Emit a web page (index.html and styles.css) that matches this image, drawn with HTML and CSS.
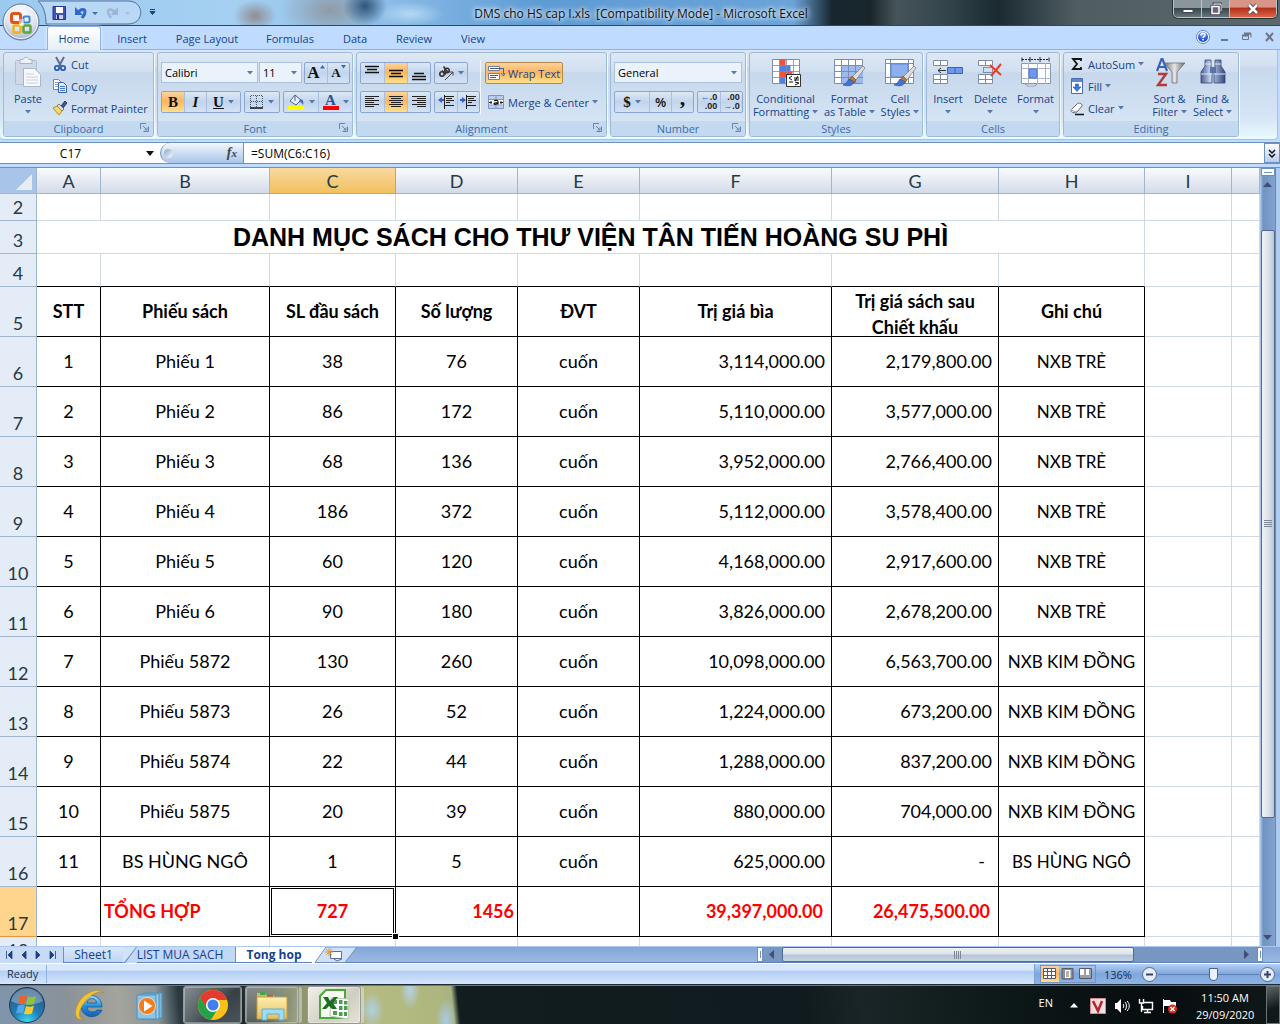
FILE: index.html
```html
<!DOCTYPE html>
<html lang="vi">
<head>
<meta charset="utf-8">
<meta name="viewport" content="width=device-width">
<title>DMS cho HS cap I.xls - Microsoft Excel</title>
<link rel="stylesheet" href="styles.css">
</head>
<body>
<svg class="defs" aria-hidden="true">
  <defs>
    <linearGradient id="gSteel" x1="0" y1="0" x2="1" y2="0"><stop offset="0" stop-color="#4a5f92"/><stop offset=".4" stop-color="#c7d5ee"/><stop offset="1" stop-color="#34497c"/></linearGradient>
    <linearGradient id="gFunnel" x1="0" y1="0" x2="1" y2="0"><stop offset="0" stop-color="#6d6d6d"/><stop offset=".5" stop-color="#e6e6e6"/><stop offset="1" stop-color="#6a6a6a"/></linearGradient>
    <radialGradient id="gOrb" cx=".5" cy=".3" r=".7"><stop offset="0" stop-color="#fff"/><stop offset=".6" stop-color="#dfe6ef"/><stop offset="1" stop-color="#9fb0c8"/></radialGradient>
    <radialGradient id="gStart" cx=".5" cy="1" r=".9"><stop offset="0" stop-color="#3fe0f5"/><stop offset=".45" stop-color="#1f7fb8"/><stop offset="1" stop-color="#31587f"/></radialGradient>
    <radialGradient id="gHelp" cx=".5" cy=".25" r=".7"><stop offset="0" stop-color="#7fb0ff"/><stop offset="1" stop-color="#0d3fc4"/></radialGradient>
    <linearGradient id="gIe" x1="0" y1="0" x2="0" y2="1"><stop offset="0" stop-color="#9fe0ff"/><stop offset=".5" stop-color="#2390dc"/><stop offset="1" stop-color="#1560b0"/></linearGradient>
    <linearGradient id="gFolder" x1="0" y1="0" x2="0" y2="1"><stop offset="0" stop-color="#fdf0b0"/><stop offset="1" stop-color="#e5bf5a"/></linearGradient>
    <symbol id="caret" viewBox="0 0 6 4"><path d="M0 0h6L3 3.500z" fill="#5579ae"/></symbol>
    <symbol id="launch" viewBox="0 0 9 9"><path d="M.5 6V.5H6M3.500 8.500h5v-5M3 3l4 4M7 4.500V7H4.500" fill="none" stroke="#6586b5"/></symbol>
    <symbol id="brush" viewBox="0 0 22 22"><path d="M20 1l2 2-9 12-4-3z" fill="#ddd" stroke="#777" stroke-width=".7"/><path d="M9 11l4 4-2 3-5-3z" fill="#b87b35" stroke="#6f4a1c" stroke-width=".6"/><path d="M6 14l5 3c-2 5-7 4-11 3 3-1 4-3 6-6z" fill="#3f74d0" stroke="#234f9e" stroke-width=".6"/></symbol>
  </defs>
</svg>

<div class="app">
  <header class="titlebar">
    <svg class="qat" width="160" height="26" viewBox="0 0 160 26">
      <path d="M38 1c5 4 8 12 8 23h82c17 0 17-23 0-23z" fill="#d4e6fb" fill-opacity=".45" stroke="#54709a"/>
      <path d="M53 6.500h12.500v13H53z" fill="#4353b8" stroke="#29348c"/><path d="M56 7h7v6h-7z" fill="#fff"/><path d="M56 15h7v4h-7z" fill="#c9cdee"/><path d="M57 15h2v4h-2z" fill="#222f80"/>
      <path d="M78 13c3-5 7-4 7-1s-2 4-3 6" fill="none" stroke="#2f69c8" stroke-width="3"/><path d="M75 7v8h8z" fill="#2f69c8"/>
      <path d="M92 12h6l-3 3z" fill="#3f6db0"/>
      <path d="M115 13c-3-5-7-4-7-1s2 4 3 6" fill="none" stroke="#9db6d8" stroke-width="2.500"/><path d="M118 7v8h-8z" fill="#9db6d8"/>
      <path d="M125 12h5l-2.500 3z" fill="#a9bfdd"/>
      <path d="M150 9.500h5M150 11.500h5l-2.500 3z" stroke="#1f3f78" fill="#1f3f78"/>
    </svg>
    <h1 class="wintitle">DMS cho HS cap I.xls&nbsp; [Compatibility Mode] - Microsoft Excel</h1>
    <div class="winbtns">
      <button aria-label="Minimize"><svg width="12" height="14" viewBox="0 0 12 14"><path d="M1 7.500h10v3H1z" fill="#fff" stroke="#445"/></svg></button>
      <button aria-label="Restore"><svg width="12" height="14" viewBox="0 0 12 14"><path d="M4 2h7v7H4z" fill="none" stroke="#445" stroke-width="3"/><path d="M4 2h7v7H4z" fill="none" stroke="#fff"/><path d="M2 4.500h7v7H2z" fill="#667" stroke="#445" stroke-width="3"/><path d="M2 4.500h7v7H2z" fill="#667" stroke="#fff" stroke-width="1.500"/></svg></button>
      <button class="close" aria-label="Close"><svg width="12" height="14" viewBox="0 0 12 14"><path d="M2 3l8 8M10 3l-8 8" stroke="#544" stroke-width="4.500"/><path d="M2 3l8 8M10 3l-8 8" stroke="#fff" stroke-width="2.500"/></svg></button>
    </div>
  </header>
  <button class="orb" aria-label="Office Button">
    <svg width="40" height="42" viewBox="0 0 40 42"><circle cx="20" cy="21" r="18" fill="url(#gOrb)" stroke="#5f7598"/><circle cx="20" cy="21" r="16.500" fill="none" stroke="#fff" stroke-opacity=".8"/>
      <g fill="none" stroke-width="3"><rect x="10.500" y="12.500" width="9" height="9" rx="2" stroke="#e2541b"/><rect x="22.500" y="15.500" width="6" height="6" rx="1" stroke="#3f86d0" stroke-width="2"/><rect x="12.500" y="24.500" width="7" height="7" rx="1" stroke="#f3b21c" stroke-width="2.500"/><rect x="22.500" y="24.500" width="7" height="7" rx="1" stroke="#5fa53c" stroke-width="2.500"/></g>
      <path d="M18 18h5v7h-5z" fill="#fff" fill-opacity=".45"/></svg>
  </button>

  <nav class="tabs">
    <button class="tab on">Home</button>
    <button class="tab t2">Insert</button>
    <button class="tab t3">Page Layout</button>
    <button class="tab t4">Formulas</button>
    <button class="tab t5">Data</button>
    <button class="tab t6">Review</button>
    <button class="tab t7">View</button>
    <svg class="docbtns" width="82" height="20" viewBox="0 0 82 20"><circle cx="10" cy="11" r="6.500" fill="#fff" stroke="#5a86c8"/><circle cx="10" cy="11" r="5" fill="url(#gHelp)"/><path d="M8 9.500c0-3 4-3 4-.5 0 1.500-2 1.500-2 3M10 13v1.500" fill="none" stroke="#fff" stroke-width="1.500"/><path d="M28 14h7" stroke="#6e7684" stroke-width="2"/><path d="M49.500 9.500h6v4h-6zM51 7.500h7v4" fill="none" stroke="#6e7684"/><path d="M49 9.500h7M51 7.500h7" stroke="#6e7684" stroke-width="2"/><path d="M73 7l7 8M80 7l-7 8" stroke="#6e7684" stroke-width="2"/></svg>
  </nav>

  <section class="ribbon">
    <div class="group g1">
      <div class="body">
        <button class="big paste">
          <svg width="28" height="32" viewBox="0 0 28 32"><rect x="1.500" y="3.500" width="21" height="24" rx="1" fill="#cfd8e6" stroke="#b3bfd1"/><path d="M6 2.500h3c0-3 6-3 6 0h3v4H6z" fill="#eef2f8" stroke="#a6b3c8"/><path d="M9.500 11.500h11l6 6v12h-17z" fill="#f7f9fc" stroke="#aab7cb"/><path d="M12 17h8M12 20h12M12 23h12M12 26h12" stroke="#c8d2e0"/></svg>
          <span>Paste</span><svg class="car"><use href="#caret"/></svg></button>
        <div class="col">
          <button class="small"><svg width="16" height="16" viewBox="0 0 16 16"><path d="M4 1l5 9M12 1L7 10" stroke="#5c6f8e" stroke-width="2"/><circle cx="5" cy="12" r="2.200" fill="none" stroke="#2e5fb4" stroke-width="1.800"/><circle cx="11" cy="12" r="2.200" fill="none" stroke="#2e5fb4" stroke-width="1.800"/></svg>Cut</button>
          <button class="small"><svg width="16" height="16" viewBox="0 0 16 16"><path d="M1.500 1.500h5l3 3v7h-8z" fill="#fff" stroke="#6f87b5"/><path d="M3 4.500h3M3 6.500h4M3 8.500h4" stroke="#7f9bd0"/><path d="M6.500 4.500h5l3 3v7h-8z" fill="#dfe9fb" stroke="#3c5ea8"/><path d="M8 8.500h5M8 10.500h5M8 12.500h5" stroke="#4a78cc"/></svg>Copy</button>
          <button class="small"><svg width="16" height="16" viewBox="0 0 16 16"><path d="M13 1l2 2-4 5-2-2z" fill="#46578a" stroke="#2d3b68"/><path d="M7 4l5 5-2 2-5-5z" fill="#ddd" stroke="#8a7a55"/><path d="M5 6l5 5-3 4-6-7z" fill="#f7d86a" stroke="#b48a28"/></svg>Format Painter</button>
        </div>
      </div>
      <div class="cap">Clipboard<svg class="lau"><use href="#launch"/></svg></div>
    </div>

    <div class="group g2">
      <div class="body rows">
        <div class="line">
          <span class="picks"><select class="w96" aria-label="Font"><option>Calibri</option></select><select class="w43" aria-label="Font size"><option>11</option></select></span>
          <span class="set"><button class="b22" aria-label="Grow Font"><span class="serif grow">A</span><svg class="up" width="5" height="4" viewBox="0 0 5 4"><path d="M0 3.500h5L2.500 0z" fill="#3a68b2"/></svg></button><button class="b22" aria-label="Shrink Font"><span class="serif shrink">A</span><svg class="up" width="5" height="4" viewBox="0 0 5 4"><path d="M0 0h5L2.500 3.500z" fill="#3a68b2"/></svg></button></span>
        </div>
        <div class="line">
          <span class="set"><button class="b22 hot serif" aria-label="Bold">B</button><button class="b22 serif ital" aria-label="Italic">I</button><button class="b34 serif und" aria-label="Underline"><u>U</u><svg class="car"><use href="#caret"/></svg></button></span>
          <span class="set"><button class="b34" aria-label="Borders"><svg width="14" height="14" viewBox="0 0 14 14"><path d="M.5 12V.5h12V12M6.500 1v11M1 6.500h12" fill="none" stroke="#456" stroke-dasharray="1 1"/><path d="M0 13h13" stroke="#111" stroke-width="1.500"/></svg><svg class="car"><use href="#caret"/></svg></button></span>
          <span class="set"><button class="b34" aria-label="Fill Color"><svg width="17" height="16" viewBox="0 0 17 16"><path d="M7 1l6 5-5 5-6-4z" fill="#e9eefa" stroke="#4d628e"/><path d="M7 1v6" stroke="#4d628e"/><path d="M12 5c3 0 4 3 3 6-1-2-2-3-4-3z" fill="#3e70c8"/><path d="M0 12h16v4H0z" fill="#ff0"/></svg><svg class="car"><use href="#caret"/></svg></button><button class="b34" aria-label="Font Color"><span class="fontcolor serif">A</span><svg class="car"><use href="#caret"/></svg></button></span>
        </div>
      </div>
      <div class="cap">Font<svg class="lau"><use href="#launch"/></svg></div>
    </div>

    <div class="group g3">
      <div class="body">
        <div class="rows bare left3">
          <div class="line">
            <span class="set"><button class="b23" aria-label="Top Align"><svg width="15" height="16" viewBox="0 0 15 16"><path d="M0 1.500h14M2 4.500h10M0 7.500h14" stroke="#111" stroke-width="1.300"/></svg></button><button class="b23 hot" aria-label="Middle Align"><svg width="15" height="16" viewBox="0 0 15 16"><path d="M0 5.500h14M2 8.500h10M0 11.500h14" stroke="#111" stroke-width="1.300"/></svg></button><button class="b23" aria-label="Bottom Align"><svg width="15" height="16" viewBox="0 0 15 16"><path d="M2 8.500h10M0 11.500h14M0 14.500h14" stroke="#111" stroke-width="1.300"/></svg></button></span>
            <span class="set"><button class="b32" aria-label="Orientation"><svg width="16" height="16" viewBox="0 0 16 16"><g fill="none" stroke="#333" stroke-width="1.600"><circle cx="4" cy="9" r="2.200"/><path d="M4 5.500l4 4"/><circle cx="9" cy="5.500" r="2.200"/><path d="M5.500 1.500l4.500 6"/></g><path d="M7 15l8-8M11.500 7H15v3.500" fill="none" stroke="#444"/></svg><svg class="car"><use href="#caret"/></svg></button></span>
          </div>
          <div class="line">
            <span class="set"><button class="b23" aria-label="Align Left"><svg width="15" height="14" viewBox="0 0 15 14"><path d="M0 1.500h14M0 3.500h9M0 5.500h14M0 7.500h9M0 9.500h14M0 11.500h9" stroke="#222"/></svg></button><button class="b23 hot" aria-label="Center"><svg width="15" height="14" viewBox="0 0 15 14"><path d="M0 1.500h14M2 3.500h10M0 5.500h14M2 7.500h10M0 9.500h14M2 11.500h10" stroke="#222"/></svg></button><button class="b23" aria-label="Align Right"><svg width="15" height="14" viewBox="0 0 15 14"><path d="M0 1.500h14M5 3.500h9M0 5.500h14M5 7.500h9M0 9.500h14M5 11.500h9" stroke="#222"/></svg></button></span>
            <span class="set"><button class="b22" aria-label="Decrease Indent"><svg width="17" height="16" viewBox="0 0 17 16"><path d="M7 2.500h9M8 4.500h6M8 6.500h8M8 8.500h4M7 11.500h9M6.500 1v14" stroke="#222"/><path d="M0 6l4-3v2h2v2H4v2z" fill="#2c62d0"/></svg></button><button class="b22" aria-label="Increase Indent"><svg width="17" height="16" viewBox="0 0 17 16"><path d="M7 2.500h9M8 4.500h6M8 6.500h8M8 8.500h4M7 11.500h9M6.500 1v14" stroke="#222"/><path d="M6 6L2 3v2H0v2h2v2z" fill="#2c62d0"/></svg></button></span>
          </div>
        </div>
        <div class="rows bare right3">
          <div class="line"><button class="wide hotbtn"><svg width="17" height="16" viewBox="0 0 17 16"><path d="M.5 1.500h11v4H.5zM.5 8.500h11v6H.5z" fill="#fff" stroke="#6f7fa5"/><path d="M2 3.500h14M2 10.500h8M2 12.500h6" stroke="#556"/><path d="M12 3.500h3.500V9M13 8l2.500 3L17 8" fill="none" stroke="#3d66b0"/></svg>Wrap Text</button></div>
          <div class="line"><button class="wide"><svg width="17" height="16" viewBox="0 0 17 16"><path d="M.5 1.500h15v13H.5z" fill="#fff" stroke="#7d95c2"/><path d="M1 2h14v3H1zM1 11.500h14V14H1z" fill="#bccdec"/><path d="M8 1v4M8 11v4M1 5.500h14M1 11h14" stroke="#7d95c2"/><path d="M1 8.500h3M12 8.500h3M3 7v3M13 7v3" stroke="#222"/><path d="M6 6.800c3-1 4 0 4 1.200v2.500M10 8.500c-3 0-4 .5-4 1.200s3 1 4-.5" fill="none" stroke="#111" stroke-width="1.200"/></svg>Merge &amp; Center<svg class="car"><use href="#caret"/></svg></button></div>
        </div>
      </div>
      <div class="cap">Alignment<svg class="lau"><use href="#launch"/></svg></div>
    </div>

    <div class="group g4">
      <div class="body rows">
        <div class="line"><select class="w128" aria-label="Number Format"><option>General</option></select></div>
        <div class="line">
          <span class="set"><button class="b34 serif" aria-label="Accounting">$<svg class="car"><use href="#caret"/></svg></button><button class="b22 pct" aria-label="Percent Style">%</button><button class="b22 serif comma" aria-label="Comma Style">,</button></span>
          <span class="set"><button class="b22 dec" aria-label="Increase Decimal"><span><i>←</i>.0<br>.00</span></button><button class="b22 dec" aria-label="Decrease Decimal"><span>.00<br><i>→</i>.0</span></button></span>
        </div>
      </div>
      <div class="cap">Number<svg class="lau"><use href="#launch"/></svg></div>
    </div>

    <div class="group g5">
      <div class="body bigs">
        <button class="big"><svg width="32" height="32" viewBox="0 0 32 32"><path d="M2.500 2.500h27v24h-27z" fill="#fff" stroke="#7c8cad"/><path d="M9.500 2h6v6h-6zM9.500 14h13v6h-13z" fill="#f0523c"/><path d="M9.500 8h11v6h-11zM9.500 20h6v6h-6z" fill="#4f80e0"/><path d="M2 8.500h28M2 14.500h28M2 20.500h28M9.500 2v25M16.500 2v25M23.500 2v25" stroke="#7c8cad" stroke-opacity=".8"/><path d="M16.500 17.500h14v12h-14z" fill="#fff" stroke="#333"/><path d="M22 19l-3 2 3 2M19 25h4M24 21h5M24 23h5M28 19l-3 5M25 25l4 1-4 2" fill="none" stroke="#111"/></svg><span>Conditional<br>Formatting <svg class="car"><use href="#caret"/></svg></span></button>
        <button class="big"><svg width="32" height="32" viewBox="0 0 32 32"><path d="M1.500 2.500h28v24h-28z" fill="#fff" stroke="#7c8cad"/><path d="M8 8h22v18H8z" fill="#9db9f2"/><path d="M1 8.500h29M1 14.500h29M1 20.500h29M8.500 2v25M15.500 2v25M22.500 2v25" stroke="#7c8cad"/><use href="#brush" x="10" y="8" width="22" height="22"/></svg><span>Format<br>as Table <svg class="car"><use href="#caret"/></svg></span></button>
        <button class="big"><svg width="32" height="32" viewBox="0 0 32 32"><path d="M1.500 2.500h28v24h-28z" fill="#fff" stroke="#7c8cad"/><path d="M1 6.500h29M1 20.500h29M6.500 2v25M24.500 2v25" stroke="#7c8cad"/><path d="M7 7h17v13H7z" fill="#8fb0f0" stroke="#5f86d0"/><use href="#brush" x="10" y="8" width="22" height="22"/></svg><span>Cell<br>Styles <svg class="car"><use href="#caret"/></svg></span></button>
      </div>
      <div class="cap">Styles</div>
    </div>

    <div class="group g6">
      <div class="body bigs">
        <button class="big"><svg width="32" height="32" viewBox="0 0 32 32"><path d="M1.500 3.500h14v5h-14zM1.500 17.500h14v9h-14zM8.500 3v6M8.500 17v10M1.500 22.500h14" fill="#fff" stroke="#7c8cad"/><path d="M15.500 10.500h15v6h-15zM23 10v7" fill="#6f98ee" stroke="#3f62b0"/><path d="M6 13.500h8M9 11l-3 2.500L9 16" fill="none" stroke="#333"/></svg><span>Insert</span><svg class="car"><use href="#caret"/></svg></button>
        <button class="big"><svg width="32" height="32" viewBox="0 0 32 32"><path d="M4.500 3.500h14v5h-14zM4.500 17.500h14v9h-14zM11.500 3v6M11.500 17v10M4.500 22.500h14" fill="#fff" stroke="#7c8cad"/><path d="M9.500 10.500h9v5h-9z" fill="none" stroke="#345" stroke-dasharray="1 1"/><path d="M16 8l11 10M27 7L17 19" stroke="#ee3b23" stroke-width="2"/></svg><span>Delete</span><svg class="car"><use href="#caret"/></svg></button>
        <button class="big"><svg width="32" height="32" viewBox="0 0 32 32"><path d="M1.500 6.500h29v20h-29z" fill="#fff" stroke="#8a97b3"/><path d="M1 11.500h30M1 21.500h30M8.500 6v21M17.500 6v21M25.500 6v21" stroke="#a9b4cb"/><path d="M9 12h8v9H9z" fill="#6f98ee" stroke="#4f78cc"/><path d="M2 2.500h27" stroke="#223" stroke-dasharray="2 1"/><path d="M2 .5v4M29 .5v4M10 0v5M20 0v5" stroke="#223"/><path d="M5 27l3 2h7l2-2z" fill="#fff" stroke="#8a97b3"/></svg><span>Format</span><svg class="car"><use href="#caret"/></svg></button>
      </div>
      <div class="cap">Cells</div>
    </div>

    <div class="group g7">
      <div class="body">
        <div class="col">
          <button class="small"><svg width="16" height="16" viewBox="0 0 16 16"><path d="M12 5V3H4l4 5-4 5h8v-2" fill="none" stroke="#111" stroke-width="1.800"/></svg>AutoSum<svg class="car"><use href="#caret"/></svg></button>
          <button class="small"><svg width="16" height="16" viewBox="0 0 16 16"><path d="M2.500.5h11v15h-11z" fill="#fff" stroke="#4a6cb0"/><path d="M3 1h10v3H3z" fill="#5c86d6"/><path d="M6.500 6h3v3H12l-4 4.500L4 9h2.500z" fill="#3c78e0" stroke="#2450a8" stroke-width=".6"/></svg>Fill<svg class="car"><use href="#caret"/></svg></button>
          <button class="small"><svg width="16" height="16" viewBox="0 0 16 16"><path d="M2 10l6-6c2-2 6 0 5 2l-5 6c-2 2-7 0-6-2z" fill="#fff" stroke="#667"/><path d="M2 9c1 2 4 3 6 2" fill="none" stroke="#99a"/><path d="M6 14.500h9" stroke="#111" stroke-width="1.500"/></svg>Clear<svg class="car"><use href="#caret"/></svg></button>
        </div>
        <div class="bigs">
          <button class="big"><svg width="32" height="32" viewBox="0 0 32 32"><path d="M3 14L7.500 2h1L13 14M5 10h6" fill="none" stroke="#3b62b8" stroke-width="2.200"/><path d="M4 17h8L4 28h9" fill="none" stroke="#b23a3a" stroke-width="2.400"/><path d="M10 6h21l-8 9v11h-5V15z" fill="url(#gFunnel)" stroke="#666" stroke-width=".7"/></svg><span>Sort &amp;<br>Filter <svg class="car"><use href="#caret"/></svg></span></button>
          <button class="big"><svg width="32" height="32" viewBox="0 0 32 32"><path d="M8 3h6v6l1 6v11H4V15l4-6zM18 3h6v6l4 6v11H17V15l1-6z" fill="url(#gSteel)" stroke="#2f4478" stroke-width=".8"/><path d="M13 10h6v6h-6z" fill="#5c73a8"/><path d="M4 17h11M17 17h11M8 7h6M18 7h6" stroke="#dfe8f8"/></svg><span>Find &amp;<br>Select <svg class="car"><use href="#caret"/></svg></span></button>
        </div>
      </div>
      <div class="cap">Editing</div>
    </div>
  </section>

  <section class="formula">
    <div class="namebox"><input value="C17" aria-label="Name Box"><svg width="8" height="5" viewBox="0 0 8 5"><path d="M0 0h8L4 5z" fill="#111"/></svg></div>
    <div class="fx"><span class="knob"></span><button aria-label="Insert Function"><em>f</em><small>x</small></button></div>
    <input class="finput" value="=SUM(C6:C16)" aria-label="Formula Bar">
    <button class="expand" aria-label="Expand"><svg width="8" height="9" viewBox="0 0 8 9"><path d="M1 1l3 3 3-3M1 5l3 3 3-3" fill="none" stroke="#111" stroke-width="1.500"/></svg></button>
  </section>

  <main class="sheet">
    <div class="tablewrap">
      <table class="grid">
        <colgroup><col class="c0"><col class="cA"><col class="cB"><col class="cC"><col class="cD"><col class="cD"><col class="cF"><col class="cG"><col class="cH"><col class="cI"><col></colgroup>
        <thead><tr><th class="corner"><svg width="18" height="18" viewBox="0 0 18 18"><path d="M17 1v16H1z" fill="#e8edf5"/></svg></th><th>A</th><th>B</th><th class="sel">C</th><th>D</th><th>E</th><th>F</th><th>G</th><th>H</th><th>I</th><th></th></tr></thead>
        <tbody>
          <tr class="r2"><th>2</th><td></td><td></td><td></td><td></td><td></td><td></td><td></td><td></td><td></td><td></td></tr>
          <tr class="r3"><th>3</th><td colspan="8" class="title">DANH MỤC SÁCH CHO THƯ VIỆN TÂN TIẾN HOÀNG SU PHÌ</td><td></td><td></td></tr>
          <tr class="r3 pre"><th>4</th><td></td><td></td><td></td><td></td><td></td><td></td><td></td><td></td><td></td><td></td></tr>
          <tr class="data head"><th>5</th><td>STT</td><td>Phiếu sách</td><td>SL đầu sách</td><td>Số lượng</td><td>ĐVT</td><td>Trị giá bìa</td><td><div class="two">Trị giá sách sau<br>Chiết khấu</div></td><td>Ghi chú</td><td></td><td></td></tr>
          <tr class="data"><th>6</th><td>1</td><td>Phiếu 1</td><td>38</td><td>76</td><td>cuốn</td><td>3,114,000.00</td><td>2,179,800.00</td><td>NXB TRẺ</td><td></td><td></td></tr>
          <tr class="data"><th>7</th><td>2</td><td>Phiếu 2</td><td>86</td><td>172</td><td>cuốn</td><td>5,110,000.00</td><td>3,577,000.00</td><td>NXB TRẺ</td><td></td><td></td></tr>
          <tr class="data"><th>8</th><td>3</td><td>Phiếu 3</td><td>68</td><td>136</td><td>cuốn</td><td>3,952,000.00</td><td>2,766,400.00</td><td>NXB TRẺ</td><td></td><td></td></tr>
          <tr class="data"><th>9</th><td>4</td><td>Phiếu 4</td><td>186</td><td>372</td><td>cuốn</td><td>5,112,000.00</td><td>3,578,400.00</td><td>NXB TRẺ</td><td></td><td></td></tr>
          <tr class="data"><th>10</th><td>5</td><td>Phiếu 5</td><td>60</td><td>120</td><td>cuốn</td><td>4,168,000.00</td><td>2,917,600.00</td><td>NXB TRẺ</td><td></td><td></td></tr>
          <tr class="data"><th>11</th><td>6</td><td>Phiếu 6</td><td>90</td><td>180</td><td>cuốn</td><td>3,826,000.00</td><td>2,678,200.00</td><td>NXB TRẺ</td><td></td><td></td></tr>
          <tr class="data"><th>12</th><td>7</td><td>Phiếu 5872</td><td>130</td><td>260</td><td>cuốn</td><td>10,098,000.00</td><td>6,563,700.00</td><td>NXB KIM ĐỒNG</td><td></td><td></td></tr>
          <tr class="data"><th>13</th><td>8</td><td>Phiếu 5873</td><td>26</td><td>52</td><td>cuốn</td><td>1,224,000.00</td><td>673,200.00</td><td>NXB KIM ĐỒNG</td><td></td><td></td></tr>
          <tr class="data"><th>14</th><td>9</td><td>Phiếu 5874</td><td>22</td><td>44</td><td>cuốn</td><td>1,288,000.00</td><td>837,200.00</td><td>NXB KIM ĐỒNG</td><td></td><td></td></tr>
          <tr class="data"><th>15</th><td>10</td><td>Phiếu 5875</td><td>20</td><td>39</td><td>cuốn</td><td>880,000.00</td><td>704,000.00</td><td>NXB KIM ĐỒNG</td><td></td><td></td></tr>
          <tr class="data"><th>16</th><td>11</td><td>BS HÙNG NGÔ</td><td>1</td><td>5</td><td>cuốn</td><td>625,000.00</td><td class="dash">-</td><td>BS HÙNG NGÔ</td><td></td><td></td></tr>
          <tr class="data total"><th class="sel">17</th><td></td><td class="l">TỔNG HỢP</td><td class="cur">727</td><td class="r">1456</td><td></td><td>39,397,000.00</td><td>26,475,500.00</td><td></td><td></td><td></td></tr>
          <tr class="r2"><th>18</th><td></td><td></td><td></td><td></td><td></td><td></td><td></td><td></td><td></td><td></td></tr>
        </tbody>
      </table>
    </div>
    <div class="vscroll">
      <div class="vsplit"></div>
      <svg class="varrow" width="9" height="5" viewBox="0 0 9 5"><path d="M0 5h9L4.500 0z" fill="#414e73"/></svg>
      <div class="vgap1"></div>
      <div class="vthumb"><svg width="8" height="8" viewBox="0 0 8 8"><path d="M0 .5h8M0 2.500h8M0 4.500h8M0 6.500h8" stroke="#7d8794"/></svg></div>
      <div class="vgap2"></div>
      <svg class="varrow" width="9" height="5" viewBox="0 0 9 5"><path d="M0 0h9L4.500 5z" fill="#414e73"/></svg>
    </div>
  </main>

  <section class="sheetbar">
    <svg class="nav" width="63" height="16" viewBox="0 0 63 16"><path d="M6.500 4v8M12 4v8L8 8zM26 4v8l-4-4zM36 4v8l4-4zM50 4v8l4-4zM55.500 4v8" fill="#1f3f86" stroke="#1f3f86" stroke-width=".8"/></svg>
    <button class="st s1">Sheet1</button>
    <svg class="slash" width="14" height="16" viewBox="0 0 14 16"><path d="M0 0h14L0 16z" fill="#d2e2f8"/><path d="M14 0L2 16h12z" fill="#c3d8f6"/><path d="M13.500 0L2 15.500" stroke="#7190bd"/></svg>
    <button class="st s2">LIST MUA SACH</button>
    <button class="st on">Tong hop</button>
    <svg width="46" height="16" viewBox="0 0 46 16"><path d="M0 0h14L3 16H0z" fill="#fff"/><path d="M14 0h31L33 15.500H3z" fill="#cfe0f8" stroke="#7190bd"/><path d="M18.500 4.500h11v7h-11z" fill="#fff" stroke="#5d6f92"/><path d="M22 12l3 2 5-2" fill="none" stroke="#5d6f92"/><path d="M17 1v8M13 5h8M14 2l6 6M20 2l-6 6" stroke="#e39a2c"/></svg>
    <div class="fill"></div>
    <div class="hscroll">
      <span class="hsplit"></span>
      <svg width="19" height="15" viewBox="0 0 19 15"><path d="M11 3v9L6 7.500z" fill="#414e73"/></svg>
      <div class="hthumb"><svg width="8" height="8" viewBox="0 0 8 8"><path d="M.5 0v8M2.500 0v8M4.500 0v8M6.500 0v8" stroke="#7d8794"/></svg></div>
      <div class="hgap"></div>
      <svg width="16" height="15" viewBox="0 0 16 15"><path d="M3 3v9l5-4.500z" fill="#414e73"/></svg>
      <span class="hsplit"></span>
    </div>
  </section>

  <footer class="status">
    <span class="ready">Ready</span>
    <div class="fill"></div>
    <div class="zoombar">
      <span class="views"><button class="hot" aria-label="Normal"><svg width="14" height="12" viewBox="0 0 14 12"><path d="M.5.5h12v10H.5zM.5 3.500h12M.5 7.500h12M4.500.5v10M8.500.5v10" fill="#fff" stroke="#5a5a66"/></svg></button><button aria-label="Page Layout"><svg width="14" height="12" viewBox="0 0 14 12"><path d="M1 .5h11v10.500H1z" fill="#8a8f99" stroke="#5a5a66"/><path d="M4 2h5.500v8H4z" fill="#fff"/><path d="M5 4h3M5 6h3M5 8h3" stroke="#667"/></svg></button><button aria-label="Page Break Preview"><svg width="14" height="12" viewBox="0 0 14 12"><path d="M.5.5h12v10H.5z" fill="#9a9fa9" stroke="#5a5a66"/><path d="M1 1h4v6H1zM7 1h3v6H7z" fill="#fff"/></svg></button></span>
      <span class="pct136">136%</span>
      <button class="round" aria-label="Zoom Out"><svg width="17" height="17" viewBox="0 0 17 17"><circle cx="8.500" cy="8.500" r="7" fill="#e4edfa" stroke="#53658a"/><path d="M5 8.500h7" stroke="#34446a" stroke-width="2"/></svg></button>
      <input type="range" min="10" max="190" value="109" aria-label="Zoom">
      <button class="round" aria-label="Zoom In"><svg width="17" height="17" viewBox="0 0 17 17"><circle cx="8.500" cy="8.500" r="7" fill="#e4edfa" stroke="#53658a"/><path d="M5 8.500h7M8.500 5v7" stroke="#34446a" stroke-width="2"/></svg></button>
    </div>
  </footer>

  <footer class="taskbar">
    <button class="start" aria-label="Start"><svg width="38" height="38" viewBox="0 0 38 38"><circle cx="19" cy="19" r="17.500" fill="url(#gStart)" stroke="#1e3c5c"/><path d="M3 15a16.500 16.500 0 0 1 32 0c-10 5-22 5-32 0z" fill="#fff" fill-opacity=".3"/><path d="M12 10c2-1 4-1 7 0l-2 8c-3-1-5-1-7 0z" fill="#f0602a"/><path d="M20 10.500c3 1 5 1 8-.5l-2 8c-3 1-5 1-8 .5z" fill="#8cc63e"/><path d="M10 19.500c2-1 4-1 7 0l-2 8c-3-1-5-1-7 0z" fill="#4fa8ec"/><path d="M18 20c3 1 5 1 8-.5l-2 8c-3 1-5 1-8 .5z" fill="#fbc928"/></svg></button>
    <button class="pin ie" aria-label="Internet Explorer"><svg width="36" height="34" viewBox="0 0 36 34"><path d="M31 19H16c0 6 8 6 10 3h5c-4 10-21 9-21-5 0-13 21-13 21 2zM16 15h9.500c0-6-9-6-9.500 0z" fill="url(#gIe)" stroke="#115293" stroke-width=".7" fill-rule="evenodd"/><path d="M33 5C28-1 14 4 8 14S4 33 12 31c-6-1-4-9 1-16S28 1 33 5z" fill="#f4c330" stroke="#b98610" stroke-width=".5"/></svg></button>
    <button class="pin wmp" aria-label="Media Player"><svg width="28" height="30" viewBox="0 0 28 30"><path d="M7 2h19v25H7z" fill="#7fb8dc" stroke="#4f8fb8"/><path d="M4 3h19v25H4z" fill="#9fd0ec" stroke="#4f8fb8"/><path d="M1 4h19v24H1z" fill="#8cc4e6" stroke="#4f8fb8"/><circle cx="11" cy="15" r="8.500" fill="#f57d18" stroke="#fff" stroke-opacity=".6"/><path d="M8 9.500v11l8.500-5.500z" fill="#fff"/></svg></button>
    <button class="task chrome" aria-label="Chrome"><svg width="32" height="32" viewBox="0 0 32 32"><circle cx="16" cy="16" r="15" fill="#fbc116"/><path d="M3 8.500A15 15 0 0 1 29 8.500L30 11H16a7 7 0 0 0-6.500 8z" fill="#e33b2e"/><path d="M3 8.500a15 15 0 0 0 11 22.300L20 21c-4 2-8 1-10-2z" fill="#24a148"/><circle cx="16" cy="16" r="7" fill="#fff"/><circle cx="16" cy="16" r="5.500" fill="#3f7ff0"/></svg></button>
    <button class="task stack" aria-label="Explorer"><svg width="34" height="32" viewBox="0 0 34 32"><path d="M2 4h8l1 2h8l1 3h12v20H2z" fill="#d9b75a"/><path d="M5 3h5v3H5z" fill="#3aa64c"/><path d="M12 6h6v3h-6z" fill="#d85038"/><path d="M21 7h7v4h-7z" fill="#4aa3e0"/><path d="M2 8h30v22H2z" fill="url(#gFolder)" stroke="#c79d3d"/><path d="M7 31V20h22v11h-5v-6H12v6z" fill="#9fdcf4" stroke="#5fb0d8"/></svg></button>
    <button class="task stack on" aria-label="Excel"><svg width="34" height="34" viewBox="0 0 34 34"><path d="M3 8l6-6h19v28H3z" fill="#f6fbf3" stroke="#4ba836" stroke-width="2"/><path d="M14 10l18 1-1 20-18-3z" fill="#fff" stroke="#b8c8b0"/><path d="M16 12h4v4h-4zM22 12h3.500v4H22zM27 13h3.500v3.500H27zM22 18h3.500v4H22zM27 18h3.500v4H27zM16 23h4v4h-4zM22 24h3.500v4H22zM27 24h3v4h-3z" fill="#4c9c52"/><path d="M6 9h5l2 4 4-4h4l-5 6 4 6h-5l-3-3-3 3H5l5-6z" fill="#1f6b22"/></svg></button>
    <div class="fill"></div>
    <div class="tray">
      <span class="en">EN</span>
      <svg width="8" height="5" viewBox="0 0 8 5"><path d="M0 4.500h8L4 0z" fill="#fff"/></svg>
      <svg width="16" height="16" viewBox="0 0 16 16"><path d="M.5.500h15v15H.5z" fill="#f2dfe0" stroke="#d58c90"/><path d="M3 3l5 10 4-10" fill="none" stroke="#b5242c" stroke-width="2.500"/></svg>
      <svg width="16" height="16" viewBox="0 0 16 16"><path d="M1 5h2l4-4v14l-4-4H1z" fill="#fff"/><path d="M9 6c1 1 1 3 0 4M11 4c2 2 2 6 0 8M13 3c3 3 3 7 0 10" fill="none" stroke="#fff"/></svg>
      <svg width="16" height="16" viewBox="0 0 16 16"><path d="M6 4.500h8.500v7H4.500V8M6 14.500h7M9.500 12v2M1.500 1v4h4V1M3.500 5v9" fill="none" stroke="#fff" stroke-width="1.400"/></svg>
      <svg width="16" height="16" viewBox="0 0 16 16"><path d="M1.500 1v14" stroke="#fff"/><path d="M2 2h6l1 2h5v6H8L7 8H2z" fill="#fff"/><circle cx="10.500" cy="11" r="4.500" fill="#dc2a20"/><path d="M8.500 9l4 4M12.500 9l-4 4" stroke="#fff" stroke-width="1.500"/></svg>
    </div>
    <div class="clock">11:50 AM<br>29/09/2020</div>
    <button class="desk" aria-label="Show desktop"></button>
  </footer>
</div>
</body>
</html>
```
FILE: styles.css
```css
* { box-sizing: border-box; }
body { margin: 0; font-family: "Open Sans", "Noto Sans", sans-serif; font-size: 11px; color: #15428b; overflow: hidden; }
button, input, select { font: inherit; color: inherit; margin: 0; padding: 0; border: 0; background: none; border-radius: 0; }
button { display: flex; align-items: center; justify-content: center; white-space: nowrap; }
svg { display: block; flex: none; }
.defs { position: absolute; width: 0; height: 0; }
.app { position: relative; display: flex; flex-direction: column; height: 100vh; background: #bfdbff; }
.fill { flex: 1; }
.car { width: 6px; height: 4px; }

.titlebar { display: flex; height: 26px; flex: none; align-items: center; border-bottom: 1px solid #33475c;
  background: radial-gradient(ellipse 22px 16px at 255px 16px, #8f8d92, transparent), radial-gradient(ellipse 22px 20px at 365px 6px, #2c567a, transparent), radial-gradient(ellipse 50px 30px at 330px 10px, #8f9ba6, transparent), radial-gradient(ellipse 34px 12px at 410px 14px, #b4d8f4, transparent), linear-gradient(90deg, #9cc9ee 0, #a5d0f2 18%, #8dbde8 30%, #5d9bd4 42%, #6ba3d8 62%, #17262f 65%, #1a262c 68%, #46545a 70%, #33444b 74%, #1a2a30 78%, #4f5d62 84%, #5c696c 100%); }
.qat { width: 160px; }
.wintitle { flex: 1; margin: 0; text-align: center; color: #111; font-weight: 400; font-size: 12px; padding: 2px 0 0 16px; line-height: 24px; text-shadow: 0 0 4px #fff, 0 0 6px #ffffffb0, 0 0 9px #ffffffa0; }
.winbtns { display: flex; width: 104px; height: 18px; margin: 0 3px 0 67px; align-self: flex-start; border: 1px solid #b9c2c6; border-top: 0; border-radius: 0 0 5px 5px; overflow: hidden; box-shadow: 0 0 0 1px #253238; }
.winbtns button { width: 28px; height: 17px; background: linear-gradient(#8a969b 45%, #39464c 50%, #66767c); border-right: 1px solid #b9c2c6; }
.winbtns .close { flex: 1; border: 0; background: linear-gradient(#d99488 40%, #b53019 50%, #d9654a); }
.orb { position: absolute; left: 1px; top: 1px; z-index: 2; }

.tabs { display: flex; align-items: flex-end; height: 24px; flex: none; padding-left: 47px; background: #bfdbff; border-bottom: 1px solid #8db2e3; }
.tab { height: 22px; width: 70px; }
.tab.on { width: 54px; background: linear-gradient(#fff, #e6eef9); border: 1px solid #8db2e3; border-bottom: 0; border-radius: 3px 3px 0 0; box-shadow: 0 0 3px #fff; height: 24px; margin-bottom: -1px; }
.t2 { width: 62px; } .t3 { width: 88px; } .t4 { width: 78px; } .t5 { width: 52px; } .t6 { width: 66px; } .t7 { width: 52px; }
.docbtns { margin-left: auto; margin-right: 5px; margin-bottom: 3px; }

.ribbon { display: flex; gap: 3px; flex: none; height: 90px; padding: 2px 3px 0; margin-right: 2px; border: 1px solid #a3c2ea; border-top: 0; border-left: 0; border-radius: 0 0 4px 4px; background: linear-gradient(#dbe6f4 0, #d3e0f1 18%, #c8d9ed 20%, #d5e5f6 75%, #e8fbfd 100%); }
.group { display: flex; flex-direction: column; flex: none; height: 85px; border: 1px solid #9ebad9; border-radius: 3px; overflow: hidden; background: linear-gradient(#dee8f5 0, #d1dff0 22%, #c7d8ed 24%, #d9e8f5 100%); box-shadow: 1px 1px 0 #f4f9fe; }
.g1 { width: 151px; } .g2 { width: 196px; } .g3 { width: 251px; } .g4 { width: 136px; } .g5 { width: 174px; } .g6 { width: 134px; } .g7 { width: 176px; }
.body { display: flex; flex: 1; }
.cap { display: flex; align-items: center; justify-content: center; position: relative; height: 15px; background: #c2d9f0; color: #3e6aaa; }
.lau { position: absolute; right: 4px; top: 2px; width: 9px; height: 9px; }
.big { display: flex; flex-direction: column; justify-content: flex-start; padding-top: 4px; gap: 3px; line-height: 13px; }
.big span { text-align: center; }
.big > .car { margin-top: 2px; }
.big span .car { display: inline-block; vertical-align: 2px; }
.paste { width: 48px; }
.col { display: flex; flex-direction: column; }
.small { justify-content: flex-start; height: 22px; gap: 3px; }
.bigs { display: flex; flex: 1; justify-content: space-around; }
.rows { display: flex; flex-direction: column; gap: 7px; padding: 9px 3px 0; }
.line { display: flex; gap: 3px; height: 22px; }
.g2 .line:first-child { gap: 2px; }
.picks { display: flex; gap: 1px; }
select { appearance: none; height: 21px; padding: 0 3px; border: 1px solid #abc1de; color: #000; background: #eaf2fb url("data:image/svg+xml,%3Csvg xmlns='http://www.w3.org/2000/svg' width='6' height='4'%3E%3Cpath d='M0 0h6L3 3.500z' fill='%235579ae'/%3E%3C/svg%3E") no-repeat right 4px center; }
.w96 { width: 97px; } .w43 { width: 43px; } .w128 { width: 128px; }
.set { display: flex; height: 22px; border: 1px solid #8ba7cf; border-radius: 2px; background: linear-gradient(#dce8f6, #c2d4ec 50%, #d3e2f5); }
.set button { height: 20px; gap: 4px; }
.set button + button { border-left: 1px solid #a9c0de; }
.b22 { width: 22px; } .b23 { width: 23px; } .b34 { width: 34px; } .b32 { width: 32px; }
.set .hot, .hotbtn, .views .hot { background: linear-gradient(#fbd3a0, #fcb55c 45%, #ffe08c); }
.serif { font-family: "Liberation Serif", serif; font-weight: 700; font-size: 15px; color: #111; line-height: 18px; }
.ital { font-style: italic; }
.grow { font-size: 17px; }
.up { align-self: flex-start; margin: 2px 0 0 -4px; }
.shrink { font-size: 13px; }
.fontcolor { width: 16px; height: 16px; line-height: 13px; color: #2f4f93; border-bottom: 4px solid #f00; text-align: center; }
.left3 { width: 124px; }
.right3 { padding-left: 4px; position: relative; }
.right3::before { content: ""; width: 1px; height: 55px; background: #f4f9ff; position: absolute; left: -1px; top: 7px; }
.wide { height: 22px; gap: 3px; padding: 0 2px; border: 1px solid transparent; border-radius: 2px; }
.hotbtn { border-color: #b58a4b; }
.pct { font-size: 13px; color: #111; font-weight: 600; }
.comma { font-size: 22px; line-height: 8px; padding-bottom: 8px; }
.dec { font: 700 9px/9px "Liberation Sans", sans-serif; color: #222; text-align: right; }
.dec i { font-style: normal; color: #2c62d0; }
.g7 .col { width: 84px; padding-left: 5px; }
.g7 .big { width: 43px; }
.g7 .bigs { flex: none; }

.formula { display: flex; flex: none; height: 22px; margin: 2px 0 3px; border-top: 1px solid #6d91bd; border-bottom: 1px solid #6d91bd; background: #fff; color: #000; font-size: 12px; }
.namebox { display: flex; align-items: center; width: 160px; }
.namebox input { width: 141px; text-align: center; margin-right: 5px; }
.fx { display: flex; align-items: center; width: 84px; padding-left: 3px; border-right: 1px solid #6d91bd; border-left: 1px solid #6d91bd; border-radius: 10px 0 0 10px; background: linear-gradient(#f2f7fd, #a9c4e8); }
.knob { width: 9px; height: 9px; border-radius: 5px; background: linear-gradient(135deg, #8ba3c4, #fff); }
.fx button { margin-left: auto; padding-right: 6px; font: italic 700 14px "Liberation Serif", serif; color: #444; }
.fx small { font-size: 11px; }
.finput { flex: 1; padding-left: 7px; }
.expand { width: 16px; border: 1px solid #6d91bd; background: linear-gradient(#fff, #b6cdec); }

.sheet { display: flex; flex: 1; min-height: 0; padding-right: 4px; border-top: 1px solid #6d91bd; background: #b0cbf0; }
.tablewrap { flex: 1; overflow: hidden; background: #fff; }
.grid { width: 100%; table-layout: fixed; border-collapse: separate; border-spacing: 0; font-family: Lato, "Noto Sans", sans-serif; font-size: 18px; color: #000; }
.c0 { width: 37px; } .cA { width: 64px; } .cB { width: 169px; } .cC { width: 126px; } .cD { width: 122px; } .cF { width: 192px; } .cG { width: 167px; } .cH { width: 146px; } .cI { width: 87px; }
.grid th, .grid td { padding: 0 0 2px; line-height: 22px; text-align: center; border-right: 1px solid #d0d7e5; border-bottom: 1px solid #d0d7e5; white-space: nowrap; }
.grid th { font-weight: 400; color: #273a44; border-color: #9eb6ce; }
.grid thead th { height: 26px; padding: 0; background: linear-gradient(#f9fcfd, #d3dbe9); }
.grid thead .corner { background: #a9c4e9; }
.corner svg { margin: 3px 3px 0 auto; }
.grid tbody th { vertical-align: bottom; background: #e4ecf7; }
.grid thead .sel { background: linear-gradient(#f9d99f, #f1c15f); border-color: #f29536; }
.grid tbody .sel { background: #ffd58d; border-bottom-color: #f29536; }
.r2 > * { height: 27px; }
.r3 > * { height: 33px; }
.grid .title { font: 700 25px/30px "Liberation Sans", sans-serif; padding: 0; }
.grid .data > * { height: 50px; }
.grid .pre td:nth-child(-n+9), .grid .data td:nth-child(-n+9) { border-bottom-color: #000; }
.grid .data td:nth-child(-n+9) { border-right-color: #000; }
.grid .data td:nth-child(9) { font-size: 17px; padding-bottom: 0; }
.head td, .total td { font-weight: 700; }
.two { height: 49px; line-height: 26px; padding-top: 1px; }
.grid .data td:nth-child(7), .grid .data td:nth-child(8) { text-align: right; padding-right: 6px; }
.grid .head td:nth-child(7) { text-align: center; padding-right: 0; }
.grid .head td:nth-child(8) { text-align: center; padding: 0; }
.grid .head td:nth-child(9) { font-size: 18px; padding-bottom: 2px; }
.grid .data td.dash:nth-child(8) { padding-right: 13px; }
.total td { color: #f00; }
.grid .total td:nth-child(7), .grid .total td:nth-child(8) { padding-right: 8px; }
.grid .total .l { text-align: left; padding-left: 3px; }
.grid .total .r { text-align: right; padding-right: 3px; }
.cur { position: relative; }
.cur::after { content: ""; position: absolute; inset: -1px; border: 1px solid #000; box-shadow: inset 0 0 0 1px #fff, inset 0 0 0 2px #000; }
.cur::before { content: ""; position: absolute; right: -3px; bottom: -3px; width: 5px; height: 5px; background: #000; outline: 1px solid #fff; z-index: 1; }

.vscroll { display: flex; flex-direction: column; align-items: center; width: 16px; background: linear-gradient(90deg, #b8d0f0, #6f93c2 20%, #83a3cf); border-right: 1px solid #6788b5; padding-bottom: 6px; }
.vsplit { width: 14px; height: 8px; background: linear-gradient(#6d91bd, #6d91bd) center / 8px 1px no-repeat #fff; border: 1px solid #6d91bd; margin-bottom: 6px; }
.vgap1 { flex: 43; }
.vthumb { flex: 586; display: flex; align-items: center; justify-content: center; width: 14px; border: 1px solid #54698f; border-radius: 2px; background: linear-gradient(90deg, #f0f2f5, #dfe4ea 50%, #b9c6d8); }
.vgap2 { flex: 117; }

.sheetbar { display: flex; flex: none; height: 17px; background: linear-gradient(#84a7d8, #9cb8e0); border-top: 1px solid #a9c9f2; border-bottom: 1px solid #5d84bb; font-size: 12px; }
.nav { background: #c8dbf6; }
.st { height: 15px; background: linear-gradient(#dbe8fa, #c0d5f4); }
.s1 { width: 60px; border-left: 1px solid #7190bd; }
.s2 { width: 99px; padding-right: 12px; border-right: 1px solid #7190bd; background: #c3d8f6; }
.st.on { width: 76px; background: #fff; font-weight: 700; }
.hscroll { display: flex; width: 506px; margin-right: 17px; background: #7796c1; }
.hsplit { width: 6px; height: 15px; background: linear-gradient(#6d91bd, #6d91bd) center / 1px 7px no-repeat #fff; border: 1px solid #6d91bd; }
.hthumb { flex: 352; display: flex; align-items: center; justify-content: center; border: 1px solid #54698f; border-radius: 2px; background: linear-gradient(#eef0f3, #dfe4ea 45%, #b5c4d8 55%, #c8d6e6); }
.hgap { flex: 107; }

.status { display: flex; flex: none; height: 22px; align-items: center; border-top: 1px solid #fff; border-bottom: 1px solid #1d2b3a; background: linear-gradient(#d9e8fb 30%, #b3cff5 36%, #d5e5fa 100%); color: #15304f; }
.ready { width: 47px; padding-left: 7px; line-height: 18px; border-right: 1px solid #8fb1de; }
.zoombar { display: flex; align-items: center; height: 20px; width: 246px; padding-left: 5px; border-left: 1px solid #7fa3d6; background: linear-gradient(#b5cff5, #7fa6dd 50%, #8fb4e6); }
.views { display: flex; border: 1px solid #7493c2; }
.views button { width: 18px; height: 16px; }
.pct136 { width: 34px; margin: 0 3px 0 8px; }
.zoombar input { appearance: none; width: 101px; height: 17px; background: linear-gradient(#5d80b5, #5d80b5) center / 100% 1px no-repeat; }
.zoombar input::-webkit-slider-thumb { appearance: none; width: 9px; height: 13px; background: #e9f1fc; border: 1px solid #4a6594; border-radius: 1px 1px 5px 5px; }

.taskbar { display: flex; flex: none; height: 39px; align-items: flex-start; border-top: 1px solid #5f7a94; color: #fff;
  background: radial-gradient(ellipse 10px 20px at 410px 4px, #b5d2e6, transparent), radial-gradient(ellipse 12px 18px at 372px 24px, #b0d0e4, transparent), radial-gradient(ellipse 10px 22px at 446px 34px, #a9cbe4, transparent), linear-gradient(84deg, #7f95ab 0, #8a9299 70px, #a5a49c 120px, #87959b 158px, #2b3a40 180px, #19242a 240px, #8c926c 300px, #b5bb82 370px, #aeb67f 440px, #a6b284 452px, #111d1f 458px, #0f1b1e 800px, #1a2527 860px, #0d1819 1000px, #070d0e 1150px, #10191a 1280px); }
.start { margin-left: 8px; }
.ie { margin: 2px 0 0 25px; }
.wmp { margin: 5px 0 0 29px; }
.task { width: 59px; height: 38px; margin-left: 19px; border: 1px solid #949a9c; border-radius: 3px; background: linear-gradient(135deg, #ffffff70, #ffffff20 60%, #ffffff38); box-shadow: inset 0 0 0 1px #ffffff50; }
.stack { width: 54px; margin-left: 3px; box-shadow: inset 0 0 0 1px #ffffff50, 4px 0 0 -1px #ffffff60; }
.stack.on { margin-left: 8px; background: linear-gradient(135deg, #f1efe8, #cfcfc0 60%, #e6e2da); }
.tray { display: flex; align-items: center; gap: 8px; height: 39px; margin-right: 18px; }
.tray .en { padding-bottom: 6px; margin-right: 9px; }
.tray svg:nth-of-type(1) { margin-right: 4px; }
.clock { width: 58px; text-align: center; line-height: 17px; padding-top: 3px; margin-right: 12px; }
.desk { width: 14px; height: 38px; border: 1px solid #6b7577; background: linear-gradient(160deg, #5b6466, #101819 60%); }
```
